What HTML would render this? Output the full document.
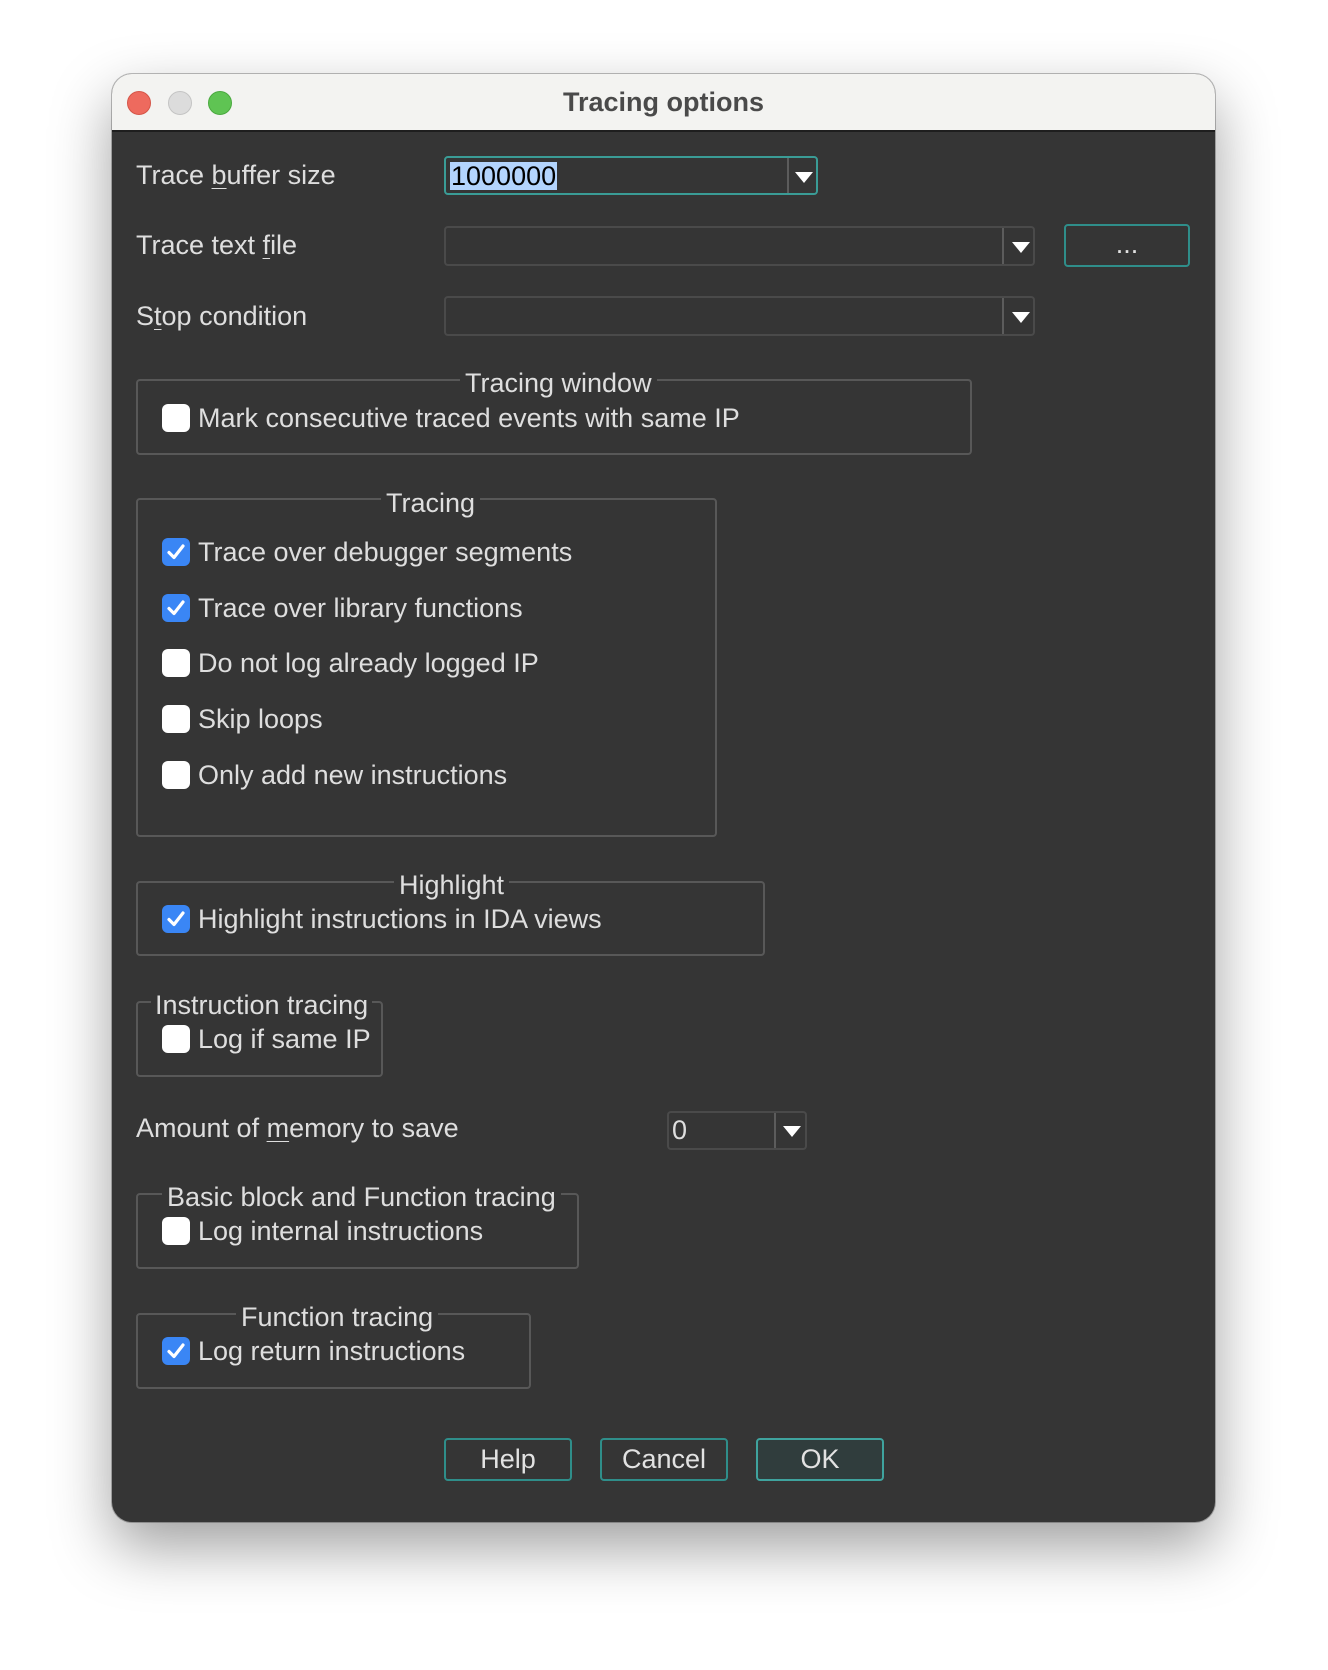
<!DOCTYPE html>
<html><head><meta charset="utf-8"><style>
*{margin:0;padding:0;box-sizing:border-box}
body{width:1328px;height:1670px;background:#fff;position:relative;overflow:hidden;font-family:"Liberation Sans",sans-serif}
.win{position:absolute;left:112px;top:74px;width:1103px;height:1448px;border-radius:20px;background:#353535;box-shadow:0 25px 60px rgba(0,0,0,.38),0 0 0 1px rgba(0,0,0,.25);overflow:hidden}
.tb{position:absolute;left:0;top:0;width:100%;height:58px;background:#f3f3f1;border-bottom:2px solid #1e1e1e}
.dot{position:absolute;top:17px;width:24px;height:24px;border-radius:50%}
.title{position:absolute;left:0;width:100%;top:13px;text-align:center;font-weight:bold;font-size:27px;color:#4a4a4a;line-height:30px}
.t{position:absolute;font-size:27px;color:#dedede;line-height:30px;white-space:nowrap}
.u{text-decoration:underline;text-underline-offset:4px;text-decoration-thickness:1px}
.inp{position:absolute;border:2px solid #4a4a4a;border-radius:4px;background:#353535}
.inp .dv{position:absolute;top:0;bottom:0;width:2px;background:#5c5c5c}
.arr{position:absolute;width:0;height:0;border-left:9px solid transparent;border-right:9px solid transparent;border-top:11px solid #fff}
.grp{position:absolute;border:2px solid #585858;border-radius:4px}
.gt{position:absolute;font-size:27px;color:#dedede;line-height:30px;background:#353535;padding:0 5px;white-space:nowrap}
.cb{position:absolute;width:28px;height:28px;border-radius:6px;background:#fff}
.cb.on{background:#3a86f5}
.cb.on svg{position:absolute;left:3px;top:3px}
.btn{position:absolute;border:2px solid #2f8e8a;border-radius:4px;font-size:27px;color:#e2e2e2;text-align:center;line-height:39px}
</style></head><body>
<div class="win">
 <div class="tb">
  <div class="dot" style="left:15px;background:#ee6a5e;border:1px solid #d55548"></div>
  <div class="dot" style="left:56px;background:#dcdcdc;border:1px solid #c4c4c4"></div>
  <div class="dot" style="left:96px;background:#5fc453;border:1px solid #4aa93f"></div>
  <div class="title">Tracing options</div>
 </div>
</div>
<div class="t" style="left:136px;top:160px">Trace <span class="u">b</span>uffer size</div>
<div class="t" style="left:136px;top:230px">Trace text <span class="u">f</span>ile</div>
<div class="t" style="left:136px;top:301px">S<span class="u">t</span>op condition</div>

<div class="inp" style="left:444px;top:156px;width:374px;height:39px;border-color:#3a9c96">
 <div style="position:absolute;left:4px;top:4px;height:28px;background:#b3d4fd;color:#000;font-size:27px;line-height:28px;padding:0 1px">1000000</div>
 <div class="dv" style="left:341px"></div><div class="arr" style="left:349px;top:14px"></div>
</div>
<div class="inp" style="left:444px;top:226px;width:591px;height:40px">
 <div class="dv" style="left:556px"></div><div class="arr" style="left:566px;top:14px"></div>
</div>
<div class="btn" style="left:1064px;top:224px;width:126px;height:43px;line-height:36px">...</div>
<div class="inp" style="left:444px;top:296px;width:591px;height:40px">
 <div class="dv" style="left:556px"></div><div class="arr" style="left:566px;top:14px"></div>
</div>

<div class="grp" style="left:136px;top:379px;width:836px;height:76px"></div>
<div class="gt" style="left:460px;top:368px">Tracing window</div>
<div class="cb" style="left:162px;top:404px"></div>
<div class="t" style="left:198px;top:403px">Mark consecutive traced events with same IP</div>

<div class="grp" style="left:136px;top:498px;width:581px;height:339px"></div>
<div class="gt" style="left:381px;top:488px">Tracing</div>
<div class="cb on" style="left:162px;top:538px"><svg width="22" height="22" viewBox="0 0 22 22"><path d="M4 11.5l5 5L18 5" stroke="#fff" stroke-width="3.2" fill="none" stroke-linecap="round" stroke-linejoin="round"/></svg></div>
<div class="t" style="left:198px;top:537px">Trace over debugger segments</div>
<div class="cb on" style="left:162px;top:594px"><svg width="22" height="22" viewBox="0 0 22 22"><path d="M4 11.5l5 5L18 5" stroke="#fff" stroke-width="3.2" fill="none" stroke-linecap="round" stroke-linejoin="round"/></svg></div>
<div class="t" style="left:198px;top:593px">Trace over library functions</div>
<div class="cb" style="left:162px;top:649px"></div>
<div class="t" style="left:198px;top:648px">Do not log already logged IP</div>
<div class="cb" style="left:162px;top:705px"></div>
<div class="t" style="left:198px;top:704px">Skip loops</div>
<div class="cb" style="left:162px;top:761px"></div>
<div class="t" style="left:198px;top:760px">Only add new instructions</div>

<div class="grp" style="left:136px;top:881px;width:629px;height:75px"></div>
<div class="gt" style="left:394px;top:870px">Highlight</div>
<div class="cb on" style="left:162px;top:905px"><svg width="22" height="22" viewBox="0 0 22 22"><path d="M4 11.5l5 5L18 5" stroke="#fff" stroke-width="3.2" fill="none" stroke-linecap="round" stroke-linejoin="round"/></svg></div>
<div class="t" style="left:198px;top:904px">Highlight instructions in IDA views</div>

<div class="grp" style="left:136px;top:1001px;width:247px;height:76px"></div>
<div class="gt" style="left:151px;top:990px;padding:0 4px">Instruction tracing</div>
<div class="cb" style="left:162px;top:1025px"></div>
<div class="t" style="left:198px;top:1024px">Log if same IP</div>

<div class="t" style="left:136px;top:1113px">Amount of <span class="u">m</span>emory to save</div>
<div class="inp" style="left:667px;top:1111px;width:140px;height:39px">
 <div style="position:absolute;left:3px;top:2px;color:#dedede;font-size:27px;line-height:30px">0</div>
 <div class="dv" style="left:105px"></div><div class="arr" style="left:114px;top:13px"></div>
</div>

<div class="grp" style="left:136px;top:1193px;width:443px;height:76px"></div>
<div class="gt" style="left:162px;top:1182px">Basic block and Function tracing</div>
<div class="cb" style="left:162px;top:1217px"></div>
<div class="t" style="left:198px;top:1216px">Log internal instructions</div>

<div class="grp" style="left:136px;top:1313px;width:395px;height:76px"></div>
<div class="gt" style="left:236px;top:1302px">Function tracing</div>
<div class="cb on" style="left:162px;top:1337px"><svg width="22" height="22" viewBox="0 0 22 22"><path d="M4 11.5l5 5L18 5" stroke="#fff" stroke-width="3.2" fill="none" stroke-linecap="round" stroke-linejoin="round"/></svg></div>
<div class="t" style="left:198px;top:1336px">Log return instructions</div>

<div class="btn" style="left:444px;top:1438px;width:128px;height:43px">Help</div>
<div class="btn" style="left:600px;top:1438px;width:128px;height:43px">Cancel</div>
<div class="btn" style="left:756px;top:1438px;width:128px;height:43px;background:#303d3d;border-color:#3fa39e">OK</div>
</body></html>
